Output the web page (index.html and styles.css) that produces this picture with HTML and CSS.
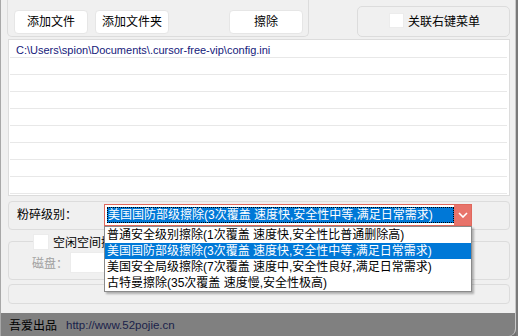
FILE: index.html
```html
<!DOCTYPE html>
<html lang="zh-CN">
<head>
<meta charset="utf-8">
<title>粉碎</title>
<link rel="stylesheet" href="styles.css">
</head>
<body>
<div class="screen">
  <div class="window">
    <div class="toprow">
      <div class="btnpanel">
        <button class="btn">添加文件</button>
        <button class="btn btn2">添加文件夹</button>
        <button class="btn btn3">擦除</button>
      </div>
      <div class="assoc"><span class="chk"></span><span>关联右键菜单</span></div>
    </div>
    <div class="list">
      <div class="row path">C:\Users\spion\Documents\.cursor-free-vip\config.ini</div>
      <div class="row"></div>
      <div class="row"></div>
      <div class="row"></div>
      <div class="row"></div>
      <div class="row"></div>
      <div class="row"></div>
      <div class="row"></div>
      <div class="row"></div>
    </div>
    <div class="panel level">
      <span class="lbl">粉碎级别：</span>
      <div class="combo">
        <div class="combo-val"><span class="sel">美国国防部级擦除(3次覆盖 速度快,安全性中等,满足日常需求)</span></div>
        <div class="combo-btn"><svg width="10" height="6" viewBox="0 0 10 6"><path d="M1 1 L5 5 L9 1" fill="none" stroke="#fff" stroke-width="1.6"/></svg></div>
        <ul class="dropdown">
          <li>普通安全级别擦除(1次覆盖 速度快,安全性比普通删除高)</li>
          <li class="hl">美国国防部级擦除(3次覆盖 速度快,安全性中等,满足日常需求)</li>
          <li>美国安全局级擦除(7次覆盖 速度中,安全性良好,满足日常需求)</li>
          <li>古特曼擦除(35次覆盖 速度慢,安全性极高)</li>
        </ul>
      </div>
    </div>
    <div class="group">
      <div class="legend"><span class="chk chk2"></span><span>空闲空间擦除</span></div>
      <span class="disk">磁盘：</span><span class="input"></span>
    </div>
    <div class="panel bottom"></div>
    <div class="status"><span class="brand">吾爱出品</span><span class="url">http://www.52pojie.cn</span></div>
  </div>
  <div class="edge"></div>
</div>
</body>
</html>
```
FILE: styles.css
```css
* { box-sizing: border-box; }
html, body { margin: 0; padding: 0; }
body {
  width: 518px;
  height: 336px;
  overflow: hidden;
  background: #6e6e6e;
  font-family: "Liberation Sans", "Noto Sans CJK SC", sans-serif;
  font-size: 12px;
  color: #000;
}
.screen { display: flex; width: 518px; height: 336px; }
.window {
  width: 516px;
  height: 336px;
  background: #f0f0f0;
  border-left: 1px solid #a8a8a8;
  border-right: 1px solid #c8c8c8;
  border-bottom-right-radius: 7px;
  display: flex;
  flex-direction: column;
  overflow: hidden;
}
.edge { flex: 1; background: #7a7a7a; }

.toprow { display: flex; height: 37px; flex: none; }
.btnpanel {
  margin-left: 6px;
  width: 302px;
  height: 37px;
  border: 1px solid #dcdcdc;
  border-top: none;
  border-radius: 0 0 5px 5px;
  display: flex;
  padding: 10px 0 0 6px;
}
.btn {
  width: 74px;
  height: 24px;
  background: #fff;
  border: 1px solid #e6e6e6;
  border-radius: 4px;
  font-family: inherit;
  font-size: 12px;
  line-height: 20px;
  padding: 0;
  color: #000;
}
.btn2 { margin-left: 7px; }
.btn3 { margin-left: 60px; }
.assoc {
  margin-left: 48px;
  margin-top: 6px;
  width: 153px;
  height: 31px;
  border: 1px solid #dcdcdc;
  border-radius: 5px;
  display: flex;
  align-items: center;
  padding-left: 31px;
  padding-bottom: 2px;
  gap: 4px;
}
.chk {
  width: 15px;
  height: 15px;
  background: #fff;
  border: 1px solid #ececec;
  flex: none;
}

.list {
  flex: none;
  margin: 2px 0 0 7px;
  width: 502px;
  height: 157px;
  background: #fff;
  border: 1px solid #dcdcdc;
  padding: 1px 2px 0 1px;
}
.row {
  height: 17px;
  border-bottom: 1px solid #e8e8e8;
}
.path {
  color: #14207a;
  padding-left: 6px;
  line-height: 19px;
  font-size: 11px;
  white-space: nowrap;
}

.panel {
  flex: none;
  margin-left: 7px;
  width: 502px;
  border: 1px solid #dcdcdc;
  border-radius: 4px;
}
.level {
  margin-top: 5px;
  height: 29px;
  display: flex;
  align-items: flex-start;
  padding: 2px 0 0 8px;
}
.lbl { width: 87px; line-height: 22px; flex: none; }
.combo {
  position: relative;
  width: 368px;
  height: 22px;
  border: 1px solid #e0685c;
  background: #fff;
  display: flex;
}
.combo-val {
  flex: 1;
  padding: 2px 0 2px 2px;
}
.sel {
  display: block;
  height: 16px;
  background: #0078d7;
  color: #fff;
  line-height: 14px;
  border: 1px dotted #000;
  white-space: nowrap;
  overflow: hidden;
}
.combo-btn {
  width: 17px;
  background: #e8736a;
  display: flex;
  align-items: center;
  justify-content: center;
}
.dropdown {
  position: absolute;
  left: -1px;
  top: 21px;
  width: 368px;
  margin: 0;
  padding: 0;
  list-style: none;
  background: #fff;
  border: 1px solid #8a8a8a;
  box-shadow: 2px 2px 2px rgba(0, 0, 0, 0.28);
  z-index: 5;
}
.dropdown li {
  height: 16px;
  line-height: 16px;
  padding-left: 2px;
  white-space: nowrap;
  overflow: hidden;
}
.dropdown li.hl { background: #0078d7; color: #fff; }

.group {
  position: relative;
  flex: none;
  margin: 11px 0 0 7px;
  width: 502px;
  height: 39px;
  border: 1px solid #dcdcdc;
  border-radius: 4px;
  display: flex;
  align-items: center;
  padding: 4px 0 0 23px;
}
.legend {
  position: absolute;
  left: 24px;
  top: -9px;
  display: flex;
  align-items: center;
  gap: 4px;
  background: #f0f0f0;
  padding-right: 2px;
}
.chk2 { width: 16px; height: 16px; }
.disk { color: #a0a0a0; width: 38px; }
.input {
  width: 110px;
  height: 21px;
  background: #fff;
  border: 1px solid #ececec;
}
.bottom {
  margin-top: 4px;
  height: 20px;
}

.status {
  margin-top: auto;
  height: 23px;
  background: #808080;
  display: flex;
  align-items: center;
  padding-left: 8px;
  flex: none;
}
.brand { color: #000; width: 57px; }
.url { color: #1a1f4a; font-size: 11.5px; }
```
